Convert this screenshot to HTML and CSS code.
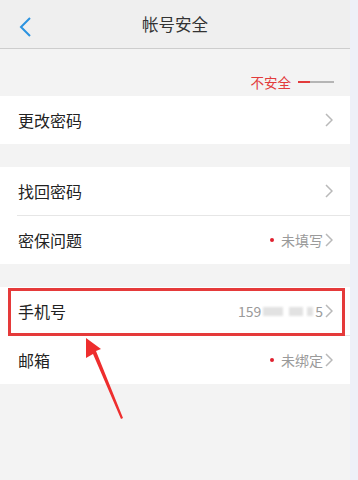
FILE: index.html
```html
<!DOCTYPE html>
<html>

<head>
  <meta charset="UTF-8">
  <title>帐号安全</title>
  <link rel="stylesheet" href="styles.css">
</head>

<body>
  <div class="app">
    <div class="header">
      <svg class="back" width="14" height="22" viewBox="0 0 14 22">
        <path d="M11 2 L2 11 L11 20" fill="none" stroke="#2b93e0" stroke-width="2" />
      </svg>
      <span class="title">帐号安全</span>
    </div>

    <div class="level">
      <span class="level-text">不安全</span>
      <span class="meter"><i class="meter-on"></i><i class="meter-off"></i></span>
    </div>

    <div class="group">
      <div class="row">
        <span class="label">更改密码</span>
        <span class="value"><svg class="arrow" width="8" height="14" viewBox="0 0 8 14"><path d="M1 1 L7 7 L1 13" /></svg></span>
      </div>
    </div>

    <div class="group">
      <div class="row">
        <span class="label">找回密码</span>
        <span class="value"><svg class="arrow" width="8" height="14" viewBox="0 0 8 14"><path d="M1 1 L7 7 L1 13" /></svg></span>
      </div>
      <div class="sep"></div>
      <div class="row">
        <span class="label">密保问题</span>
        <span class="value"><i class="dot"></i>未填写<svg class="arrow" width="8" height="14" viewBox="0 0 8 14"><path d="M1 1 L7 7 L1 13" /></svg></span>
      </div>
    </div>

    <div class="group">
      <div class="row marked">
        <span class="label">手机号</span>
        <span class="value">159<span class="masked"><b class="m1"></b><b class="m2"></b><b class="m3"></b></span>5<svg class="arrow" width="8" height="14" viewBox="0 0 8 14"><path d="M1 1 L7 7 L1 13" /></svg></span>
        <div class="highlight"></div>
      </div>
      <div class="sep"></div>
      <div class="row">
        <span class="label">邮箱</span>
        <span class="value"><i class="dot"></i>未绑定<svg class="arrow" width="8" height="14" viewBox="0 0 8 14"><path d="M1 1 L7 7 L1 13" /></svg></span>
      </div>
    </div>

    <!-- annotation arrow pointing at the phone row -->
    <svg class="pointer" width="60" height="100" viewBox="0 0 60 100">
      <polygon points="26,0 41,11 36,13 63,80 61,81 33,16 26,20" fill="#ee2e2e" />
    </svg>
  </div>
</body>

</html>
```

FILE: styles.css
```css
html,
body {
  margin: 0;
  height: 100%;
}

body {
  background: #eef0f8;
  font-family: "Noto Sans CJK SC", "Noto Sans", sans-serif;
  color: #222;
}

.app {
  position: relative;
  width: 350px;
  height: 480px;
  background: #f3f3f3;
  overflow: hidden;
}

.header {
  position: relative;
  height: 48px;
  background: #efefef;
  border-bottom: 1px solid #cdcdcd;
  display: flex;
  align-items: center;
  justify-content: center;
}

.back {
  position: absolute;
  left: 19px;
  top: 16px;
}

.title {
  font-size: 16.5px;
  color: #333;
}

.level {
  height: 47px;
  display: flex;
  align-items: center;
  justify-content: flex-end;
  padding-right: 16px;
  padding-top: 19px;
  box-sizing: border-box;
}

.level-text {
  font-size: 13.5px;
  color: #e23b3b;
}

.meter {
  display: flex;
  margin-left: 7px;
}

.meter i {
  display: block;
  height: 2px;
}

.meter-on {
  width: 12px;
  background: #e23b3b;
}

.meter-off {
  width: 24px;
  background: #b5b5b5;
}

.group {
  background: #fff;
  margin-bottom: 23px;
}

.row {
  position: relative;
  height: 48px;
  display: flex;
  align-items: center;
  justify-content: space-between;
  padding: 0 17px 0 18px;
}

.label {
  font-size: 16px;
  color: #222;
}

.value {
  display: flex;
  align-items: center;
  font-size: 14px;
  color: #9a9a9a;
}

.arrow {
  margin-left: 2px;
}

.arrow path {
  fill: none;
  stroke: #b9b9b9;
  stroke-width: 1.5;
}

.dot {
  width: 4px;
  height: 4px;
  border-radius: 50%;
  background: #e0202f;
  margin-right: 7px;
}

.sep {
  height: 1px;
  background: #e6e6e6;
  margin-left: 17px;
}

.masked {
  display: flex;
  align-items: center;
  width: 54px;
  height: 16px;
  filter: blur(1px);
}

.masked b {
  display: block;
  height: 9px;
  background: #e2e2e2;
}

.m1 {
  width: 20px;
  margin-left: 2px;
}

.m2 {
  width: 14px;
  margin-left: 6px;
  height: 11px;
}

.m3 {
  width: 6px;
  margin-left: 4px;
}

.highlight {
  position: absolute;
  left: 8px;
  right: 5px;
  top: 1px;
  bottom: -1px;
  border: 3px solid #e53a3a;
}

.pointer {
  position: absolute;
  left: 60px;
  top: 338px;
  overflow: visible;
}
```
